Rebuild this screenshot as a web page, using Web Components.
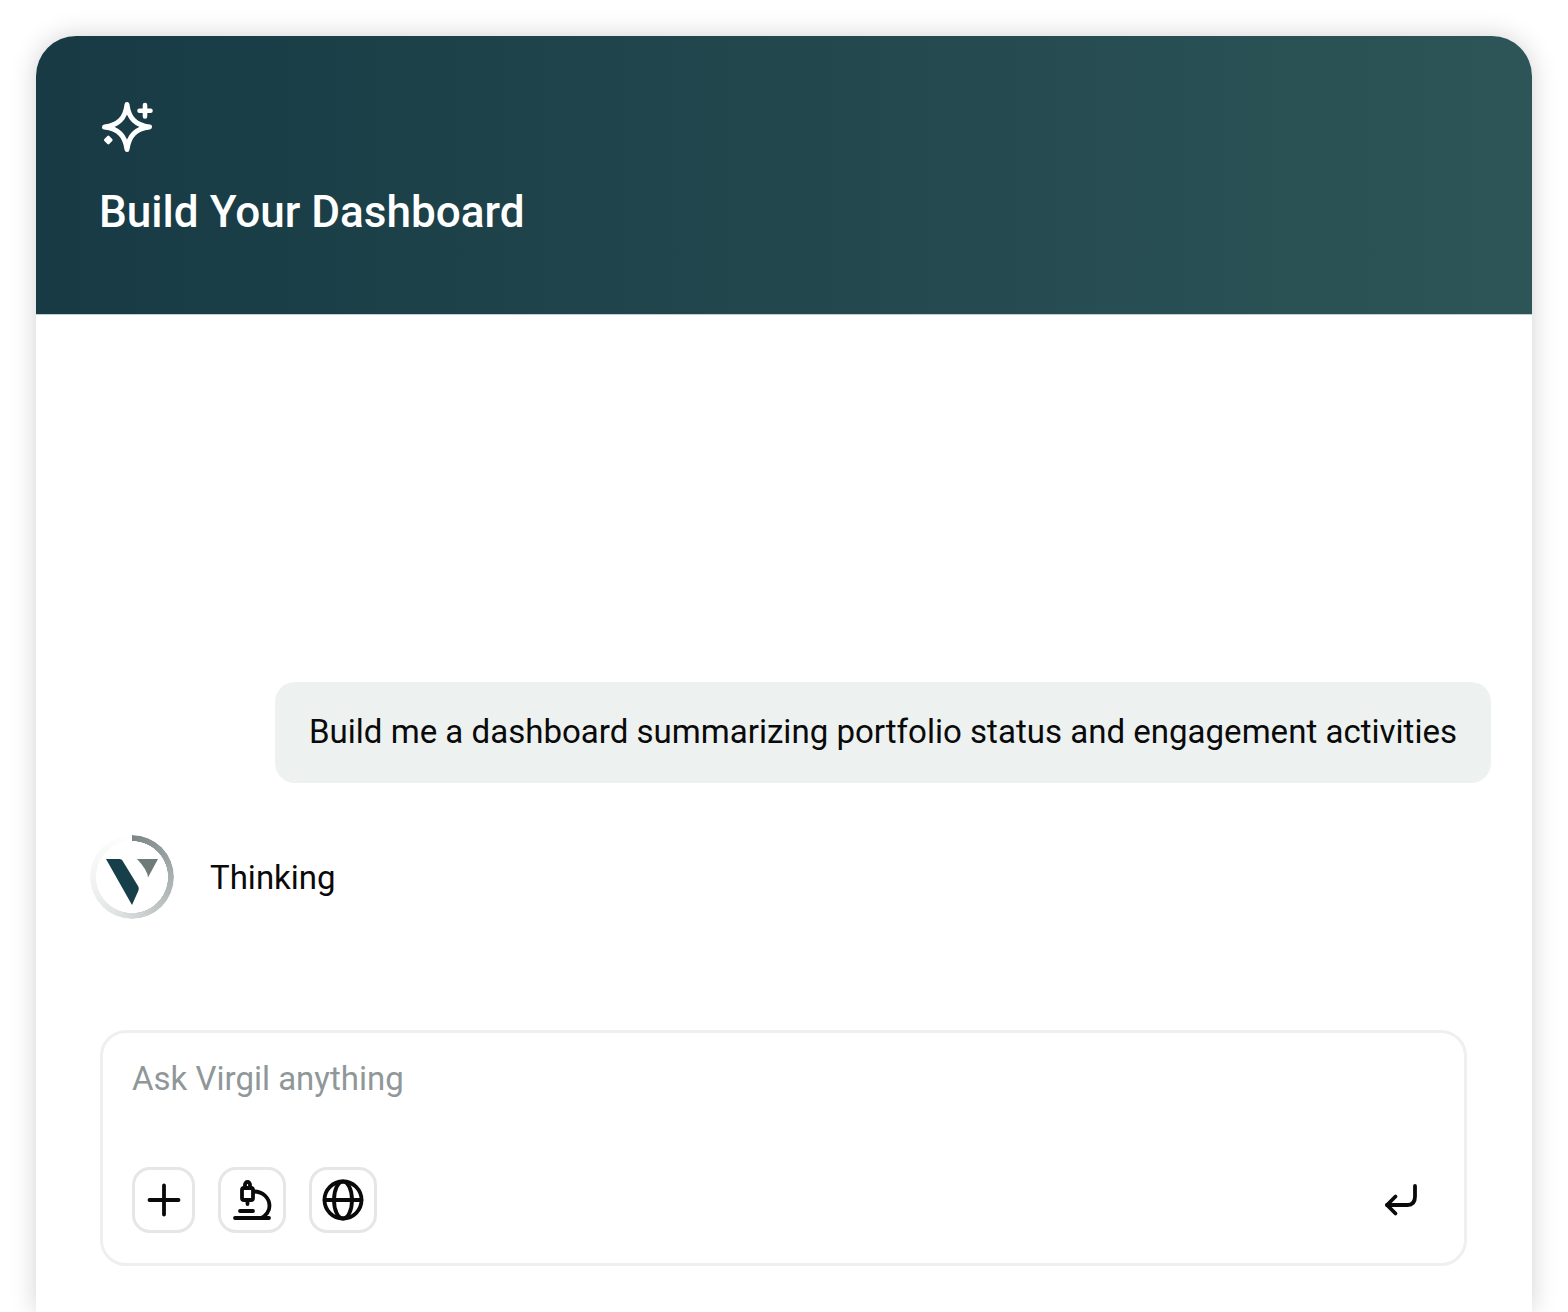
<!DOCTYPE html>
<html>
<head>
<meta charset="utf-8">
<title>Build Your Dashboard</title>
<style>
html, body { margin: 0; height: 1312px; overflow: hidden; background: #fff; }
body { font-family: Roboto, "Liberation Sans", sans-serif; color: #0a0a0a; }
</style>
</head>
<body>
<chat-panel>
  <panel-header slot="header" title="Build Your Dashboard"></panel-header>
  <user-bubble>Build me a dashboard summarizing portfolio status and engagement activities</user-bubble>
  <thinking-row>Thinking</thinking-row>
  <ask-box placeholder="Ask Virgil anything"></ask-box>
</chat-panel>

<script>
class ChatPanel extends HTMLElement {
    constructor() {
        super();
        this.attachShadow({ mode: 'open' }).innerHTML = `
        <style>
        :host { display: block; padding: 36px 36px 0; box-sizing: border-box; height: 1312px; overflow: hidden; }
        .card {
            height: 100%;
            background: #fff;
            border-radius: 40px 40px 0 0;
            box-shadow: 0 0 26px rgba(0, 0, 0, .18);
            overflow: hidden;
            display: flex;
            flex-direction: column;
        }
        .body {
            flex: 1;
            display: flex;
            flex-direction: column;
            padding: 367px 41px 0 56px;
        }
        </style>
        <div class="card">
            <slot name="header"></slot>
            <div class="body"><slot></slot></div>
        </div>`;
    }
}

class PanelHeader extends HTMLElement {
    constructor() {
        super();
        this.attachShadow({ mode: 'open' }).innerHTML = `
        <style>
        :host { display: block; }
        header {
            height: 279px;
            box-sizing: border-box;
            padding: 64px 64px 0;
            background: linear-gradient(90deg, #173a44 0%, #2d5557 100%);
            border-bottom: 1px solid #c4cccd;
            color: #fff;
        }
        svg { display: block; width: 56px; height: 56px; }
        h1 {
            margin: 28px 0 0 -1px;
            font: 500 44.1px/56px Roboto, sans-serif;
            white-space: nowrap;
        }
        </style>
        <header>
            <svg viewBox="0 0 56 56" fill="none" stroke="#fff" stroke-width="5" stroke-linecap="round" stroke-linejoin="round">
                <path d="M27 4.500C28.800 18.500 35.500 25.200 49.500 27C35.500 28.800 28.800 35.500 27 49.500C25.200 35.500 18.500 28.800 4.500 27C18.500 25.200 25.200 18.500 27 4.500Z"/>
                <path d="M45 5V16.500M39.500 10.700H50.500" stroke-width="4.600"/>
                <path d="M8.300 37L11.300 40L8.300 43L5.300 40Z" fill="#fff" stroke-width="2.600"/>
            </svg>
            <h1>${this.getAttribute('title')}</h1>
        </header>`;
    }
}

class UserBubble extends HTMLElement {
    constructor() {
        super();
        this.attachShadow({ mode: 'open' }).innerHTML = `
        <style>
        :host {
            display: block;
            align-self: flex-end;
            background: #edf1f0;
            border-radius: 20px;
            padding: 28px 34px 29px 34px;
            font-size: 33.06px;
            line-height: 44px;
            white-space: nowrap;
        }
        </style>
        <slot></slot>`;
    }
}

class ThinkingRow extends HTMLElement {
    constructor() {
        super();
        this.attachShadow({ mode: 'open' }).innerHTML = `
        <style>
        :host {
            display: flex;
            align-items: center;
            gap: 35px;
            margin: 51px 0 0 -3px;
            font-size: 33px;
            line-height: 44px;
        }
        .logo { position: relative; width: 86px; height: 86px; flex: none; }
        .ring {
            position: absolute;
            inset: 1px;
            border-radius: 50%;
            background: conic-gradient(#7b8687 0deg, #a3abac 80deg, #c4c9c9 150deg, #dfe2e2 200deg, #eff1f1 250deg, #f7f8f8 300deg, #ffffff 360deg);
            -webkit-mask: radial-gradient(closest-side, transparent 85%, #000 86%);
            mask: radial-gradient(closest-side, transparent 85%, #000 86%);
        }
        svg { position: absolute; inset: 0; width: 86px; height: 86px; }
        span { padding-top: 2px; }
        </style>
        <div class="logo">
            <div class="ring"></div>
            <svg viewBox="0 0 86 86">
                <path fill="#173f49" d="M17 25H30.500C32 25 33 25.700 34 27.500L49 52C50 53.700 50 55.500 49 57.500L43 71Z"/>
                <path fill="#6f7b79" d="M48 25H69L59 43.500Q58.500 36 48 25Z"/>
            </svg>
        </div>
        <span><slot></slot></span>`;
    }
}

class IconButton extends HTMLElement {
    constructor() {
        super();
        this.attachShadow({ mode: 'open' }).innerHTML = `
        <style>
        :host {
            display: flex;
            align-items: center;
            justify-content: center;
            box-sizing: border-box;
            height: 66px;
            width: var(--w, 68px);
            border: 3px solid #e6e6e6;
            border-radius: 18px;
            background: #fff;
        }
        </style>
        <slot></slot>`;
    }
}

class AskBox extends HTMLElement {
    constructor() {
        super();
        this.attachShadow({ mode: 'open' }).innerHTML = `
        <style>
        :host {
            display: block;
            box-sizing: border-box;
            margin: 110px 0 0 8px;
            width: 1367px;
            height: 236px;
            border: 3px solid #eef0f0;
            border-radius: 26px;
            padding: 24px 30px 0 29px;
        }
        .placeholder { font-size: 33px; line-height: 44px; color: #8f9799; }
        .tools { display: flex; align-items: center; margin-top: 66px; }
        .left { display: flex; gap: 23px; }
        .enter { margin-left: auto; margin-right: 14px; display: block; }
        svg { display: block; fill: none; stroke: #0a0a0a; stroke-width: 3.800; stroke-linecap: round; stroke-linejoin: round; }
        </style>
        <div class="placeholder">${this.getAttribute('placeholder')}</div>
        <div class="tools">
            <div class="left">
                <icon-button style="--w:63px">
                    <svg width="36" height="36" viewBox="0 0 36 36"><path d="M18 3.500V32.500M3.500 18H32.500"/></svg>
                </icon-button>
                <icon-button>
                    <svg width="44" height="44" viewBox="0 0 44 44">
                        <path d="M5 40H39"/>
                        <path d="M10 33H23"/>
                        <path d="M15 10V6.500a2.500 2.500 0 0 1 5 0V10"/>
                        <path d="M14 10H21a2 2 0 0 1 2 2V20a2 2 0 0 1-2 2H14a2 2 0 0 1-2-2V12a2 2 0 0 1 2-2Z"/>
                        <path d="M17.500 22V26"/>
                        <path d="M24 13.500C33 13.500 39.500 20 39.500 28C39.500 33 36 38 31 40"/>
                    </svg>
                </icon-button>
                <icon-button>
                    <svg width="44" height="44" viewBox="0 0 44 44">
                        <circle cx="22" cy="22" r="18.500"/>
                        <ellipse cx="22" cy="22" rx="9" ry="18.500"/>
                        <path d="M3.500 22H40.500"/>
                    </svg>
                </icon-button>
            </div>
            <svg class="enter" width="40" height="40" viewBox="0 0 40 40">
                <path d="M35 6V16.500Q35 25 27.500 25H7"/>
                <path d="M15.500 16.500L7 25L15.500 33.500"/>
            </svg>
        </div>`;
    }
}

customElements.define('icon-button', IconButton);
customElements.define('panel-header', PanelHeader);
customElements.define('user-bubble', UserBubble);
customElements.define('thinking-row', ThinkingRow);
customElements.define('ask-box', AskBox);
customElements.define('chat-panel', ChatPanel);
</script>
</body>
</html>
